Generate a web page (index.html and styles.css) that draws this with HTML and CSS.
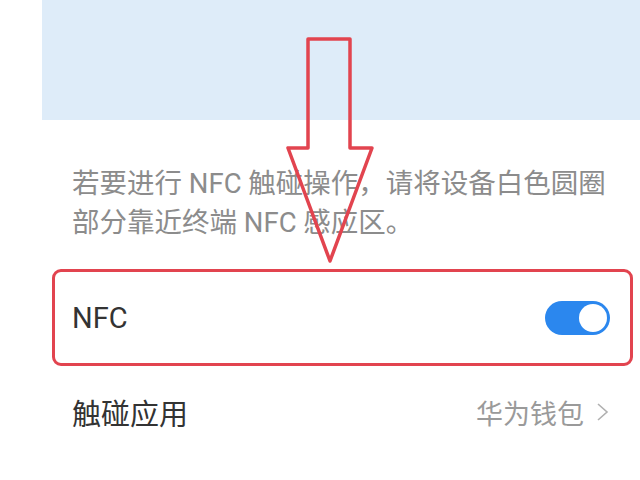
FILE: index.html
```html
<!DOCTYPE html>
<html>
	<head>
		<title>NFC</title>
		<meta name="viewport" content="width=device-width, initial-scale=1" />
		<link rel="stylesheet" href="styles.css">
	</head>
	<body>
		<div class="screen">
			<div class="hero"></div>

			<p class="hint">若要进行 NFC 触碰操作，请将设备白色圆圈部分靠近终端 NFC 感应区。</p>

			<div class="row row-marked">
				<span class="row-title">NFC</span>
				<span class="switch on"><span class="knob"></span></span>
			</div>

			<div class="row row-plain">
				<span class="row-title">触碰应用</span>
				<span class="row-value">
					华为钱包
					<svg class="chevron" width="13" height="20" viewBox="0 0 13 20">
						<polyline points="2,2 11,10 2,18" />
					</svg>
				</span>
			</div>

			<!-- annotation arrow drawn over the page -->
			<svg class="arrow" width="100" height="240" viewBox="280 30 100 240">
				<polygon points="308,39 350,39 350,148 372,148 330,261 288,148 308,148" />
			</svg>
		</div>
	</body>
</html>
```

FILE: styles.css
```css
body {
	margin: 0;
	background-color: #fff;
	font-family: Roboto, "Noto Sans CJK SC", sans-serif;
}
.screen {
	position: relative;
	width: 640px;
	height: 480px;
	overflow: hidden;
}
.hero {
	margin-left: 42px;
	height: 120px;
	background-color: #deecf9;
}
.hint {
	margin: 44px 0 0;
	padding: 0 20px 0 72px;
	font-size: 27.5px;
	line-height: 39px;
	color: #8c8c8c;
}
.row {
	display: flex;
	align-items: center;
	justify-content: space-between;
	box-sizing: border-box;
}
.row-title {
	font-size: 29px;
	color: #333;
}
.row-marked {
	margin: 27px 7px 0 52px;
	height: 97px;
	padding: 0 20px 0 17px;
	border: 3px solid #e2444f;
	border-radius: 9px;
}
.row-plain {
	height: 92px;
	padding: 0 31px 0 72px;
}
.row-value {
	display: flex;
	align-items: center;
	gap: 12px;
	font-size: 27px;
	color: #9a9a9a;
}
.chevron polyline {
	fill: none;
	stroke: #b0b0b0;
	stroke-width: 1.6;
}
.switch {
	position: relative;
	width: 65px;
	height: 34px;
	border-radius: 17px;
	background-color: #2b87ee;
}
.switch .knob {
	position: absolute;
	top: 3px;
	right: 3px;
	width: 28px;
	height: 28px;
	border-radius: 50%;
	background-color: #fff;
}
.arrow {
	position: absolute;
	left: 280px;
	top: 30px;
	pointer-events: none;
}
.arrow polygon {
	fill: none;
	stroke: #e2444f;
	stroke-width: 3.5;
	stroke-linejoin: round;
}
```
